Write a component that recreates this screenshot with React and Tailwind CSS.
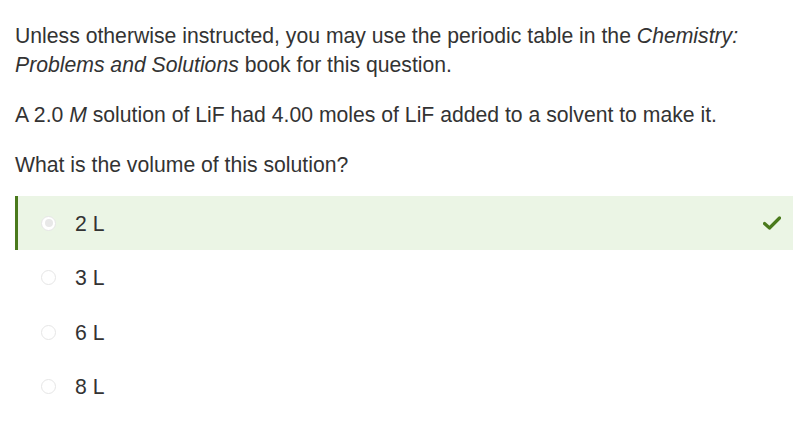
export default function App() {
  const options = ['2 L', '3 L', '6 L', '8 L'];
  return (
    <div className="min-h-screen bg-white text-[#333333] pl-[15px] pr-[15px] pt-[21px] font-['Liberation_Sans',Arial,sans-serif]">
      <p className="text-[21.2px] leading-[29px]">
        Unless otherwise instructed, you may use the periodic table in the <i>Chemistry: Problems and Solutions</i> book for this question.
      </p>
      <p className="text-[21.2px] leading-[29px] mt-[21px]">
        A 2.0 <i>M</i> solution of LiF had 4.00 moles of LiF added to a solvent to make it.
      </p>
      <p className="text-[21.2px] leading-[29px] mt-[21px]">What is the volume of this solution?</p>
      <div className="mt-[17px] flex flex-col">
        {options.map((o, i) => (
          <div
            key={o}
            className={
              i === 0
                ? 'flex items-center h-[54px] bg-[#ebf5e5] border-l-[3px] border-[#4a7a1c] pl-[23px] pr-[12px]'
                : 'flex items-center h-[54.7px] border-l-[3px] border-transparent pl-[23px] pr-[12px]'
            }
          >
            <span className="w-[15px] h-[15px] rounded-full border border-[#e6e6e6] bg-white flex items-center justify-center">
              {i === 0 && <span className="w-[8px] h-[8px] rounded-full bg-[#e8e8e8]" />}
            </span>
            <span className="ml-[19px] text-[21.2px] leading-[29px] flex-1">{o}</span>
            {i === 0 && (
              <svg width="18" height="14" viewBox="0 0 18 14">
                <path d="M1.5 7.5 L6.5 12 L16.5 2" fill="none" stroke="#4a7a1c" strokeWidth="3.2" strokeLinecap="round" strokeLinejoin="round" />
              </svg>
            )}
          </div>
        ))}
      </div>
    </div>
  );
}
